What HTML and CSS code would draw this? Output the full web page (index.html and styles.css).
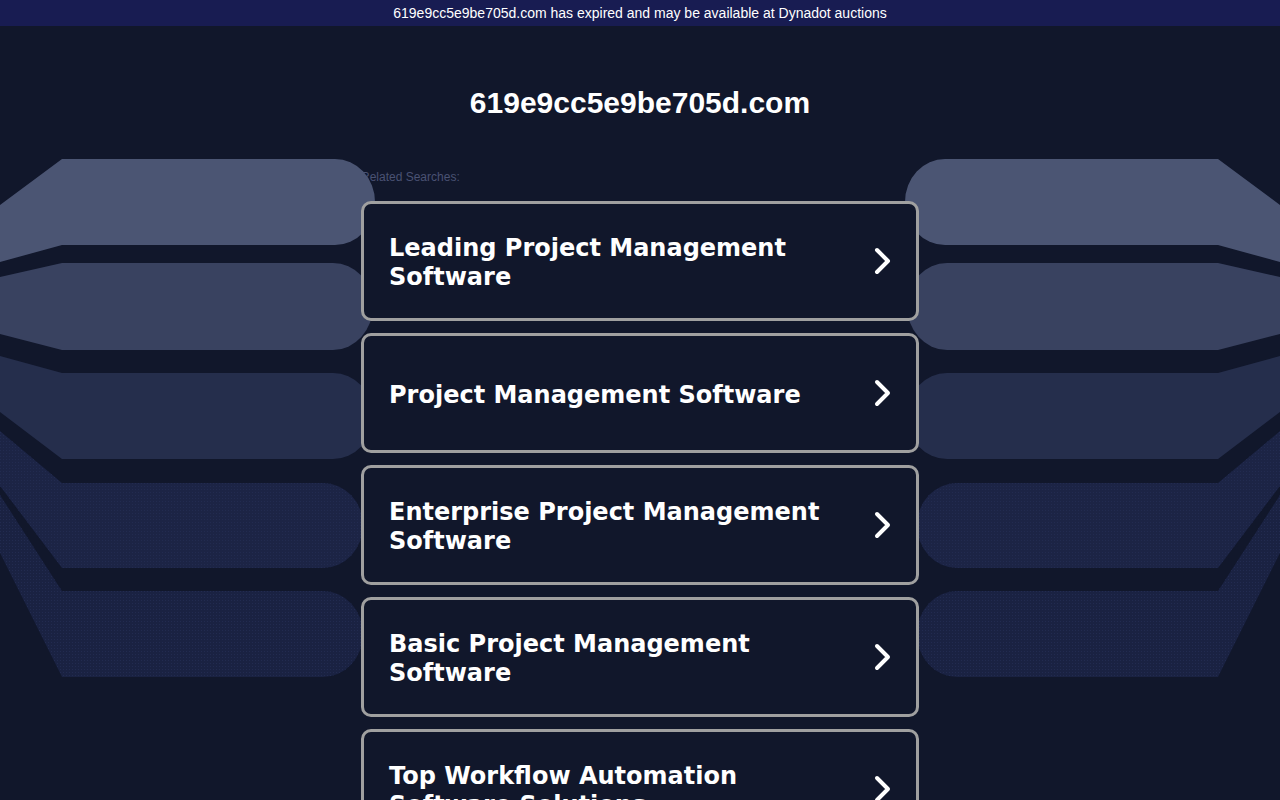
FILE: index.html
```html
<!DOCTYPE html>
<html lang="en">
<head>
<meta charset="utf-8">
<title>619e9cc5e9be705d.com</title>
<link rel="stylesheet" href="styles.css">
</head>
<body>
<div class="topbar">619e9cc5e9be705d.com has expired and may be available at Dynadot auctions</div>
<svg class="bg" width="1280" height="800" viewBox="0 0 1280 800" aria-hidden="true">
  <defs>
    <pattern id="dots" width="3" height="3" patternUnits="userSpaceOnUse">
      <rect x="0" y="0" width="1" height="1" fill="#222b50"/>
    </pattern>
    <g id="side">
      <path fill="#4b5573" d="M0,205 L62,159 L335,159 A40,43 0 0 1 375,202 A40,43 0 0 1 335,245 L62,245 L0,262 Z"/>
      <path fill="#394260" d="M0,277 L62,263 L333,263 A40,43 0 0 1 373,306 A40,44 0 0 1 333,350 L62,350 L0,334 Z"/>
      <path fill="#252e4c" d="M0,356 L62,373 L333,373 A40,43 0 0 1 373,416 A40,43 0 0 1 333,459 L62,459 L0,412 Z"/>
      <path fill="#1c2445" d="M0,431 L62,483 L323,483 A40,42 0 0 1 363,525 A40,43 0 0 1 323,568 L62,568 L0,486 Z"/>
      <path fill="url(#dots)" d="M0,431 L62,483 L323,483 A40,42 0 0 1 363,525 A40,43 0 0 1 323,568 L62,568 L0,486 Z"/>
      <path fill="#1a2242" d="M0,495 L62,591 L323,591 A40,43 0 0 1 363,634 A40,43 0 0 1 323,677 L62,677 L0,553 Z"/>
      <path fill="url(#dots)" d="M0,495 L62,591 L323,591 A40,43 0 0 1 363,634 A40,43 0 0 1 323,677 L62,677 L0,553 Z"/>
    </g>
  </defs>
  <use href="#side"/>
  <use href="#side" transform="translate(1280,0) scale(-1,1)"/>
</svg>
<main class="main">
  <h1 class="domain">619e9cc5e9be705d.com</h1>
  <div class="related">Related Searches:</div>
  <div class="list">
    <a class="card" href="#"><span class="label">Leading Project Management Software</span><svg class="chev" width="20" height="28" viewBox="0 0 20 28"><polyline points="4,3 15,14 4,25" fill="none" stroke="#fff" stroke-width="4" stroke-linecap="round" stroke-linejoin="round"/></svg></a>
    <a class="card" href="#"><span class="label">Project Management Software</span><svg class="chev" width="20" height="28" viewBox="0 0 20 28"><polyline points="4,3 15,14 4,25" fill="none" stroke="#fff" stroke-width="4" stroke-linecap="round" stroke-linejoin="round"/></svg></a>
    <a class="card" href="#"><span class="label">Enterprise Project Management Software</span><svg class="chev" width="20" height="28" viewBox="0 0 20 28"><polyline points="4,3 15,14 4,25" fill="none" stroke="#fff" stroke-width="4" stroke-linecap="round" stroke-linejoin="round"/></svg></a>
    <a class="card" href="#"><span class="label">Basic Project Management Software</span><svg class="chev" width="20" height="28" viewBox="0 0 20 28"><polyline points="4,3 15,14 4,25" fill="none" stroke="#fff" stroke-width="4" stroke-linecap="round" stroke-linejoin="round"/></svg></a>
    <a class="card" href="#"><span class="label">Top Workflow Automation Software Solutions</span><svg class="chev" width="20" height="28" viewBox="0 0 20 28"><polyline points="4,3 15,14 4,25" fill="none" stroke="#fff" stroke-width="4" stroke-linecap="round" stroke-linejoin="round"/></svg></a>
  </div>
</main>
</body>
</html>
```

FILE: styles.css
```css
html, body {
  margin: 0;
  padding: 0;
  background: #11172b;
}
body {
  font-family: "Liberation Sans", Arial, sans-serif;
  color: #fff;
  position: relative;
  min-height: 800px;
}
.topbar {
  height: 26px;
  line-height: 26px;
  background: #181c52;
  color: #fff;
  font-size: 14px;
  text-align: center;
}
.bg {
  position: absolute;
  top: 0;
  left: 0;
  z-index: 0;
  pointer-events: none;
}
.main {
  width: 558px;
  margin: 0 auto;
}
.domain {
  margin: 0;
  padding-top: 59px;
  font-size: 30px;
  line-height: 36px;
  font-weight: bold;
  text-align: center;
  color: #fff;
}
.related {
  margin-top: 49px;
  font-size: 12px;
  line-height: 14px;
  color: #4a5273;
}
.list {
  margin-top: 17px;
  display: flex;
  flex-direction: column;
  gap: 12px;
  position: relative;
  z-index: 1;
}
.card {
  box-sizing: border-box;
  height: 120px;
  border: 3px solid #a0a0a0;
  border-radius: 10px;
  background: #11172b;
  display: flex;
  align-items: center;
  justify-content: space-between;
  padding: 4px 23px 0 25px;
  text-decoration: none;
  color: #fff;
}
.label {
  font-family: "DejaVu Sans", Verdana, sans-serif;
  font-weight: bold;
  font-size: 24px;
  line-height: 29px;
  max-width: 440px;
}
.chev {
  flex: none;
  margin-top: -4px;
}
```
